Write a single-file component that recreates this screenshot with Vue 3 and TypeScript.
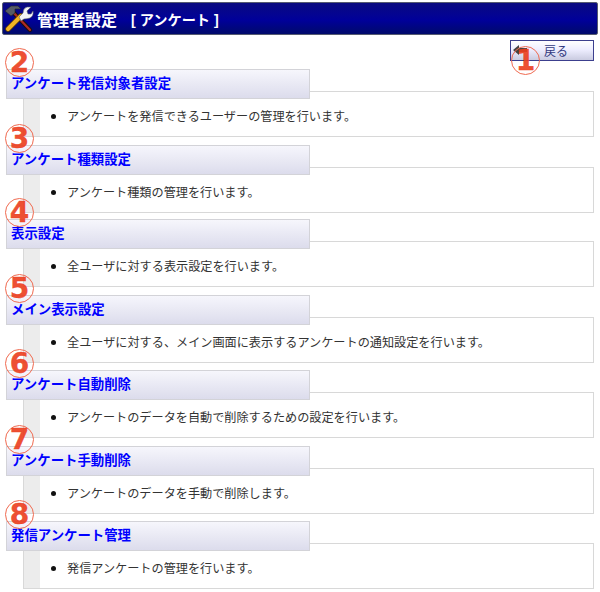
<script setup lang="ts">
interface Item { n: string; title: string; desc: string }
const items: Item[] = [
  { n: '2', title: 'アンケート発信対象者設定', desc: 'アンケートを発信できるユーザーの管理を行います。' },
  { n: '3', title: 'アンケート種類設定', desc: 'アンケート種類の管理を行います。' },
  { n: '4', title: '表示設定', desc: '全ユーザに対する表示設定を行います。' },
  { n: '5', title: 'メイン表示設定', desc: '全ユーザに対する、メイン画面に表示するアンケートの通知設定を行います。' },
  { n: '6', title: 'アンケート自動削除', desc: 'アンケートのデータを自動で削除するための設定を行います。' },
  { n: '7', title: 'アンケート手動削除', desc: 'アンケートのデータを手動で削除します。' },
  { n: '8', title: '発信アンケート管理', desc: '発信アンケートの管理を行います。' },
]
</script>

<template>
  <div class="page">
    <header class="hdr">
      <svg class="tool" viewBox="0 0 30 30" width="30" height="30">
        <path d="M8 7 L26 26" stroke="#1a1010" stroke-width="4.4" stroke-linecap="round" />
        <path d="M8 7 L26 26" stroke="#b02a24" stroke-width="2.2" stroke-linecap="round" />
        <path d="M1 7 L7 2 L14 2 L17 5 L11 5 L11 9 L7 12 Z" fill="#565b66" stroke="#20222a" stroke-width=".6" />
        <path d="M4 25 L17 12" stroke="#5a3a06" stroke-width="5.6" stroke-linecap="round" />
        <path d="M4 25 L17 12" stroke="#f2b425" stroke-width="4" stroke-linecap="round" />
        <path d="M15 13 L19 9 Q19 4 23 3 L27 3 L23 7 L24 10 L27 10 L29 7 Q30 12 26 14 Q23 15 20 15 L17 17 Z" fill="#f2f3f6" stroke="#555b6a" stroke-width=".6" />
      </svg>
      <span class="hdr-title">管理者設定</span>
      <span class="hdr-sub">[ アンケート ]</span>
    </header>
    <div class="toolbar">
      <button class="back" type="button">
        <svg class="arrow" viewBox="0 0 16 12" width="16" height="12">
          <path d="M1 6 L7 1 L7 4 L15 4 L15 8 L7 8 L7 11 Z" fill="#444" />
        </svg>
        <span>戻る</span>
        <span class="num num-back">1</span>
      </button>
    </div>
    <section v-for="it in items" :key="it.n" class="sec">
      <span class="num num-sec">{{ it.n }}</span>
      <h2 class="ttl">{{ it.title }}</h2>
      <div class="box">
        <ul class="list"><li>{{ it.desc }}</li></ul>
      </div>
    </section>
  </div>
</template>

<style>
html, body { margin: 0; background: #fff; }
</style>

<style scoped>
.page {
  width: 600px;
  height: 592px;
  overflow: hidden;
  box-sizing: border-box;
  padding-top: 2px;
  font-family: "Liberation Sans", "Noto Sans CJK JP", sans-serif;
  color: #333;
}
.hdr {
  margin: 0 2px;
  height: 33px;
  box-sizing: border-box;
  display: flex;
  align-items: center;
  padding-left: 1px;
  border-radius: 2px;
  border: 1px solid #555a70;
  background: linear-gradient(#0a0a80 0%, #00009a 55%, #000a6a 100%);
  color: #fff;
  font-weight: bold;
}
.tool { flex: none; }
.hdr-title { margin-left: 3px; font-size: 16px; }
.hdr-sub { margin-left: 14px; font-size: 14.2px; }
.toolbar {
  height: 34px;
  box-sizing: border-box;
  display: flex;
  justify-content: flex-end;
  align-items: flex-start;
  padding: 5px 6px 0 0;
}
.back {
  position: relative;
  width: 84px;
  height: 21px;
  box-sizing: border-box;
  padding: 0 0 0 33px;
  border: 1px solid #3c3f8e;
  background: linear-gradient(#fff 0%, #eef 45%, #c9cbe0 100%);
  font: 12px "Liberation Sans", "Noto Sans CJK JP", sans-serif;
  color: #333a80;
  text-align: left;
}
.arrow { position: absolute; left: 1px; top: 3px; }
.num {
  position: absolute;
  width: 29px;
  height: 29px;
  box-sizing: border-box;
  border: 1px solid #f06a50;
  border-radius: 50%;
  color: rgba(236, 62, 30, .92);
  font: bold 28px/28px "DejaVu Sans", sans-serif;
  -webkit-text-stroke: .4px rgba(236, 62, 30, .92);
  text-align: center;
}
.num-back { left: 0; top: 5px; }
.num-sec { left: 5px; top: -21px; z-index: 2; }
.sec {
  position: relative;
  height: 75px;
}
.sec:nth-of-type(1), .sec:nth-of-type(3), .sec:nth-of-type(5) { height: 76px; }
.sec:nth-of-type(2) { height: 74px; }
.ttl {
  margin: 0 0 0 6px;
  width: 304px;
  height: 30px;
  box-sizing: border-box;
  padding-left: 4px;
  border: 1px solid #d3d3d8;
  background: linear-gradient(#f6f6fc 0%, #dcdcec 100%);
  color: #0000ff;
  font-size: 13.4px;
  line-height: 28px;
  font-weight: bold;
  position: relative;
  z-index: 1;
}
.box {
  margin: -8px 0 0 23px;
  width: 571px;
  height: 46px;
  box-sizing: border-box;
  border: 1px solid #d8d8d8;
  background: linear-gradient(to right, #ececec 16px, #fff 16px);
  display: flex;
  align-items: center;
  padding-top: 5px;
}
.list {
  margin: 0;
  padding: 0 0 0 43px;
  font-size: 12.15px;
  line-height: 16px;
  color: #333;
}
.list li::marker { font-size: 16px; color: #111; }
</style>
